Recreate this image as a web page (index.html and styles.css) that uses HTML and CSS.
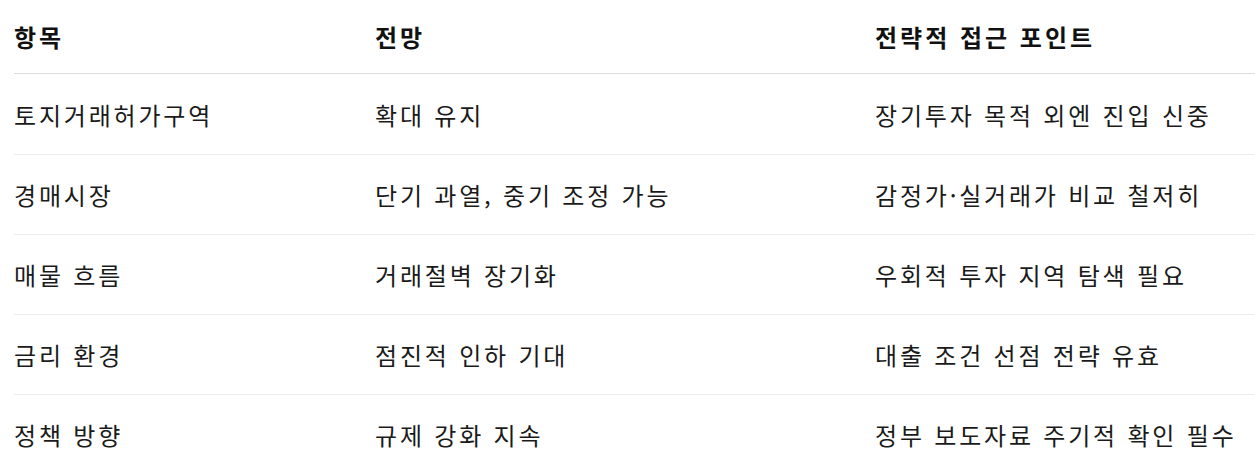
FILE: index.html
```html
<!DOCTYPE html>
<html lang="ko">
<head>
<meta charset="utf-8">
<link rel="stylesheet" href="styles.css">
</head>
<body>
<div class="wrap">
<table class="tbl">
<thead>
<tr><th class="c1">항목</th><th class="c2">전망</th><th class="c3">전략적 접근 포인트</th></tr>
</thead>
<tbody>
<tr class="first"><td>토지거래허가구역</td><td>확대 유지</td><td>장기투자 목적 외엔 진입 신중</td></tr>
<tr><td>경매시장</td><td>단기 과열, 중기 조정 가능</td><td>감정가·실거래가 비교 철저히</td></tr>
<tr><td>매물 흐름</td><td>거래절벽 장기화</td><td>우회적 투자 지역 탐색 필요</td></tr>
<tr><td>금리 환경</td><td>점진적 인하 기대</td><td>대출 조건 선점 전략 유효</td></tr>
<tr><td>정책 방향</td><td>규제 강화 지속</td><td>정부 보도자료 주기적 확인 필수</td></tr>
</tbody>
</table>
</div>
</body>
</html>
```
FILE: styles.css
```css
html, body {
  margin: 0;
  padding: 0;
  background: #fff;
}
.wrap {
  padding-left: 14px;
  overflow: hidden;
}
.tbl {
  width: 1241px;
  border-collapse: collapse;
  table-layout: fixed;
  font-family: "Noto Sans CJK KR", "Noto Sans", sans-serif;
  font-size: 24px;
  color: #1a1a1a;
}
.c1 { width: 361px; }
.c2 { width: 500px; }
.c3 { width: 380px; }
.tbl th {
  text-align: left;
  font-weight: 700;
  color: #111;
  height: 73px;
  padding: 0;
  letter-spacing: 3px;
  border-bottom: 1px solid #dcdcdc;
  vertical-align: middle;
  white-space: nowrap;
}
.tbl td {
  padding: 0;
  height: 79px;
  letter-spacing: 2.8px;
  word-spacing: 0;
  border-bottom: 1px solid #ececec;
  vertical-align: middle;
  white-space: nowrap;
}
.tbl tr.first td {
  height: 80px;
}
```
